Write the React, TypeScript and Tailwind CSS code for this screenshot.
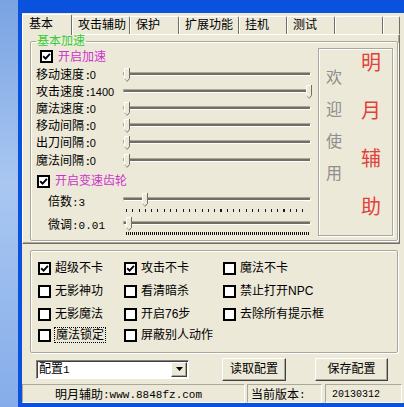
import React from "react";

const sans = "font-['Liberation_Sans','Noto_Sans_CJK_SC',sans-serif]";
const mono = "font-['Liberation_Mono','Noto_Sans_CJK_SC',monospace]";

function Check({ checked }: { checked?: boolean }) {
  return (
    <div className="w-[13px] h-[13px] border-2 border-black bg-white flex items-center justify-center shrink-0">
      {checked && (
        <svg width="9" height="9" viewBox="0 0 9 9">
          <path d="M1.2 4.3 L3.6 6.6 L7.9 1.9" stroke="#000" strokeWidth="1.9" fill="none" />
        </svg>
      )}
    </div>
  );
}

function Thumb({ left }: { left: number }) {
  return (
    <svg className="absolute top-0" style={{ left }} width="6" height="14" viewBox="0 0 6 14">
      <path d="M0.5 0.5 H5.5 V10.5 L3 13.5 L0.5 10.5 Z" fill="#ece9d8" />
      <path d="M0.5 11 V0.5 H5" stroke="#ffffff" fill="none" strokeWidth="1" />
      <path d="M5.5 0 V10.5 L3 13.5" stroke="#716f64" fill="none" strokeWidth="1" />
      <path d="M3 13.3 L0.6 10.6" stroke="#aca899" fill="none" strokeWidth="1" />
    </svg>
  );
}

function Slider({ offset }: { offset: number }) {
  return (
    <div className="relative w-[188px] h-[14px] shrink-0">
      <div className="mt-[4px] h-[4px] border-t border-l border-[#aca899] border-b border-r border-b-white border-r-white bg-[#716f64]" />
      <Thumb left={offset} />
    </div>
  );
}

const rows: [string, string, number][] = [
  ["移动速度", ":0", 1],
  ["攻击速度", ":1400", 183],
  ["魔法速度", ":0", 1],
  ["移动间隔", ":0", 1],
  ["出刀间隔", ":0", 1],
  ["魔法间隔", ":0", 1],
];

const tabs: [string, number][] = [
  ["攻击辅助", 58],
  ["保护", 49],
  ["扩展功能", 60],
  ["挂机", 48],
  ["测试", 48],
  ["", 48],
  ["", 17],
];

const checkRows: { label: string; checked?: boolean; focus?: boolean }[][] = [
  [
    { label: "超级不卡", checked: true },
    { label: "攻击不卡", checked: true },
    { label: "魔法不卡" },
  ],
  [{ label: "无影神功" }, { label: "看清暗杀" }, { label: "禁止打开NPC" }],
  [{ label: "无影魔法" }, { label: "开启76步" }, { label: "去除所有提示框" }],
  [{ label: "魔法锁定", focus: true }, { label: "屏蔽别人动作" }],
];
const rowHeights = ["h-[22px]", "h-[24px]", "h-[22px]", "h-[20px]"];
const colWidths = ["w-[86px]", "w-[99px]", "flex-1"];

export default function App() {
  return (
    <div className={`w-[404px] h-[407px] flex overflow-hidden bg-[#8cb2ea] text-[12px] text-black ${sans}`}>
      <div className="w-[18px] h-full shrink-0 bg-[linear-gradient(180deg,#7aa3e3,#a9c7f1_45%,#86adea)]" />
      <div className="flex-1 flex flex-col bg-[#0a52de] pl-[4px] pt-[13px] pb-[4px]">
        <div className="flex-1 bg-[#ece9d8] flex flex-col">
          {/* Tabs */}
          <div className="h-[21px] flex items-end shrink-0">
            <div className="relative z-10 -mb-px h-[21px] w-[50px] bg-[#ece9d8] border-l border-t border-white border-r border-r-[#716f64] rounded-t-[2px] pl-[6px] pt-[2px] leading-[14px]">
              基本
            </div>
            {tabs.map(([t, w], i) => (
              <div
                key={i}
                className="h-[18px] bg-[#ece9d8] border-l border-t border-white border-r border-r-[#716f64] rounded-t-[2px] pl-[5px] pt-[1px] leading-[14px] whitespace-nowrap shrink-0"
                style={{ width: w }}
              >
                {t}
              </div>
            ))}
          </div>

          {/* Panel */}
          <div className="h-[210px] w-[378px] shrink-0 border border-white border-r-[#716f64] border-b-[#716f64] shadow-[inset_-1px_-1px_0_#aca899]">
            <fieldset className="ml-[7px] w-[368px] h-[206px] border border-[#aca899] rounded-[2px] shadow-[1px_1px_0_#fff,inset_1px_1px_0_#fff]">
              <legend className="ml-[5px] px-[1px] leading-[12px] text-[#33cc33]">基本加速</legend>
              <div className="flex">
                <div className="w-[287px] flex flex-col shrink-0">
                  <div className="h-[19px] flex items-center pl-[9px] gap-[5px]">
                    <Check checked />
                    <span className="text-[#cc33cc] leading-[14px]">开启加速</span>
                  </div>
                  {rows.map(([l, v, o]) => (
                    <div key={l} className="h-[17.2px] flex items-center pl-[5px]">
                      <div className="w-[87px] shrink-0 flex items-center leading-[14px] whitespace-nowrap">
                        <span>{l}</span>
                        <span className="ml-[2px] font-bold text-[11px]">{v.slice(0, 1)}</span>
                        <span className="text-[11px]">{v.slice(1)}</span>
                      </div>
                      <Slider offset={o} />
                    </div>
                  ))}
                  <div className="h-[24px] flex items-center pl-[6px] gap-[5px]">
                    <Check checked />
                    <span className="text-[#cc33cc] leading-[14px]">开启变速齿轮</span>
                  </div>
                  <div className="h-[24px] flex pl-[17px]">
                    <div className="w-[75px] shrink-0 mt-[2px] leading-[14px]">
                      倍数<span className={`${mono} text-[11px]`}>:3</span>
                    </div>
                    <div className="flex flex-col">
                      <Slider offset={19} />
                      <div className="mt-[2px] ml-[3px] w-[183px] h-[3px] bg-[repeating-linear-gradient(90deg,#1a1a1a_0px,#1a1a1a_1px,transparent_1px,transparent_6.3px)]" />
                    </div>
                  </div>
                  <div className="flex pl-[17px]">
                    <div className="w-[75px] shrink-0 mt-[1px] leading-[14px]">
                      微调<span className={`${mono} text-[11px]`}>:0.01</span>
                    </div>
                    <div className="flex flex-col">
                      <Slider offset={3} />
                      <div className="mt-[1px] ml-[3px] w-[183px] h-[3px] bg-[repeating-linear-gradient(90deg,#111_0px,#111_1px,transparent_1px,transparent_2px)]" />
                    </div>
                  </div>
                </div>
                <div className="w-[75px] h-[188px] mt-[1px] shrink-0 border border-[#aca899] shadow-[inset_1px_1px_0_#fff,1px_1px_0_#fff] flex pl-[7px]">
                  <div className="flex flex-col pt-[21px] gap-[16px] text-[16px] leading-[16px] text-[#8e8e8e]">
                    <span>欢</span>
                    <span>迎</span>
                    <span>使</span>
                    <span>用</span>
                  </div>
                  <div className="ml-[19px] flex flex-col pt-[4px] gap-[28px] text-[20px] leading-[20px] text-[#e3403a]">
                    <span>明</span>
                    <span>月</span>
                    <span>辅</span>
                    <span>助</span>
                  </div>
                </div>
              </div>
            </fieldset>
          </div>

          {/* Checkbox group */}
          <div className="mt-[6px] ml-[8px] w-[368px] h-[103px] shrink-0 border border-[#aca899] rounded-[2px] shadow-[inset_1px_1px_0_#fff,1px_1px_0_#fff] pt-[6px] pl-[7px] flex flex-col">
            {checkRows.map((r, ri) => (
              <div key={ri} className={`${rowHeights[ri]} flex items-center`}>
                {r.map((c, ci) => (
                  <div key={ci} className={`${colWidths[ci]} flex items-center gap-[4px]`}>
                    <Check checked={c.checked} />
                    <span
                      className={
                        c.focus
                          ? "leading-[14px] px-[1px] outline outline-1 outline-dotted outline-black whitespace-nowrap"
                          : "leading-[14px] whitespace-nowrap"
                      }
                    >
                      {c.label}
                    </span>
                  </div>
                ))}
              </div>
            ))}
          </div>

          {/* Bottom controls */}
          <div className="mt-[5px] h-[22px] shrink-0 flex items-center pl-[14px]">
            <div className="w-[153px] h-[19px] shrink-0 bg-white border border-[#808080] border-r-white border-b-white shadow-[inset_1px_1px_0_#404040] flex items-center pl-[2px] pr-[1px]">
              <span className="flex-1 leading-[14px] pt-[1px]">
                配置<span className={`${mono} text-[11px]`}>1</span>
              </span>
              <div className="w-[16px] h-[15px] bg-[#ece9d8] border border-white border-r-[#404040] border-b-[#404040] shadow-[inset_-1px_-1px_0_#aca899] flex items-center justify-center">
                <svg width="7" height="4" viewBox="0 0 7 4">
                  <path d="M0 0 H7 L3.5 4 Z" fill="#000" />
                </svg>
              </div>
            </div>
            <div className="ml-[33px] w-[64px] h-[23px] shrink-0 bg-[#ece9d8] border border-white border-r-[#404040] border-b-[#404040] shadow-[inset_-1px_-1px_0_#aca899] flex items-center justify-center leading-[14px]">
              读取配置
            </div>
            <div className="ml-[29px] w-[73px] h-[23px] shrink-0 bg-[#ece9d8] border border-white border-r-[#404040] border-b-[#404040] shadow-[inset_-1px_-1px_0_#aca899] flex items-center justify-center leading-[14px]">
              保存配置
            </div>
          </div>

          {/* Status bar */}
          <div className="mt-[4px] h-[19px] shrink-0 flex">
            <div className="w-[223px] shrink-0 border border-[#aca899] border-r-white border-b-white flex items-center pl-[32px] pt-[2px] leading-[14px] whitespace-nowrap">
              明月辅助<span className={`${mono} text-[11px]`}>:www.8848fz.com</span>
            </div>
            <div className="ml-[2px] w-[75px] shrink-0 border border-[#aca899] border-r-white border-b-white flex items-center pl-[3px] pt-[2px] leading-[14px] whitespace-nowrap">
              当前版本<span className={`${mono} text-[11px]`}>:</span>
            </div>
            <div className="ml-[3px] w-[77px] shrink-0 border border-[#aca899] border-r-white border-b-white flex items-center pl-[6px] pt-[2px] leading-[14px] whitespace-nowrap">
              <span className={`${mono} text-[10px]`}>20130312</span>
            </div>
          </div>
        </div>
      </div>
    </div>
  );
}
